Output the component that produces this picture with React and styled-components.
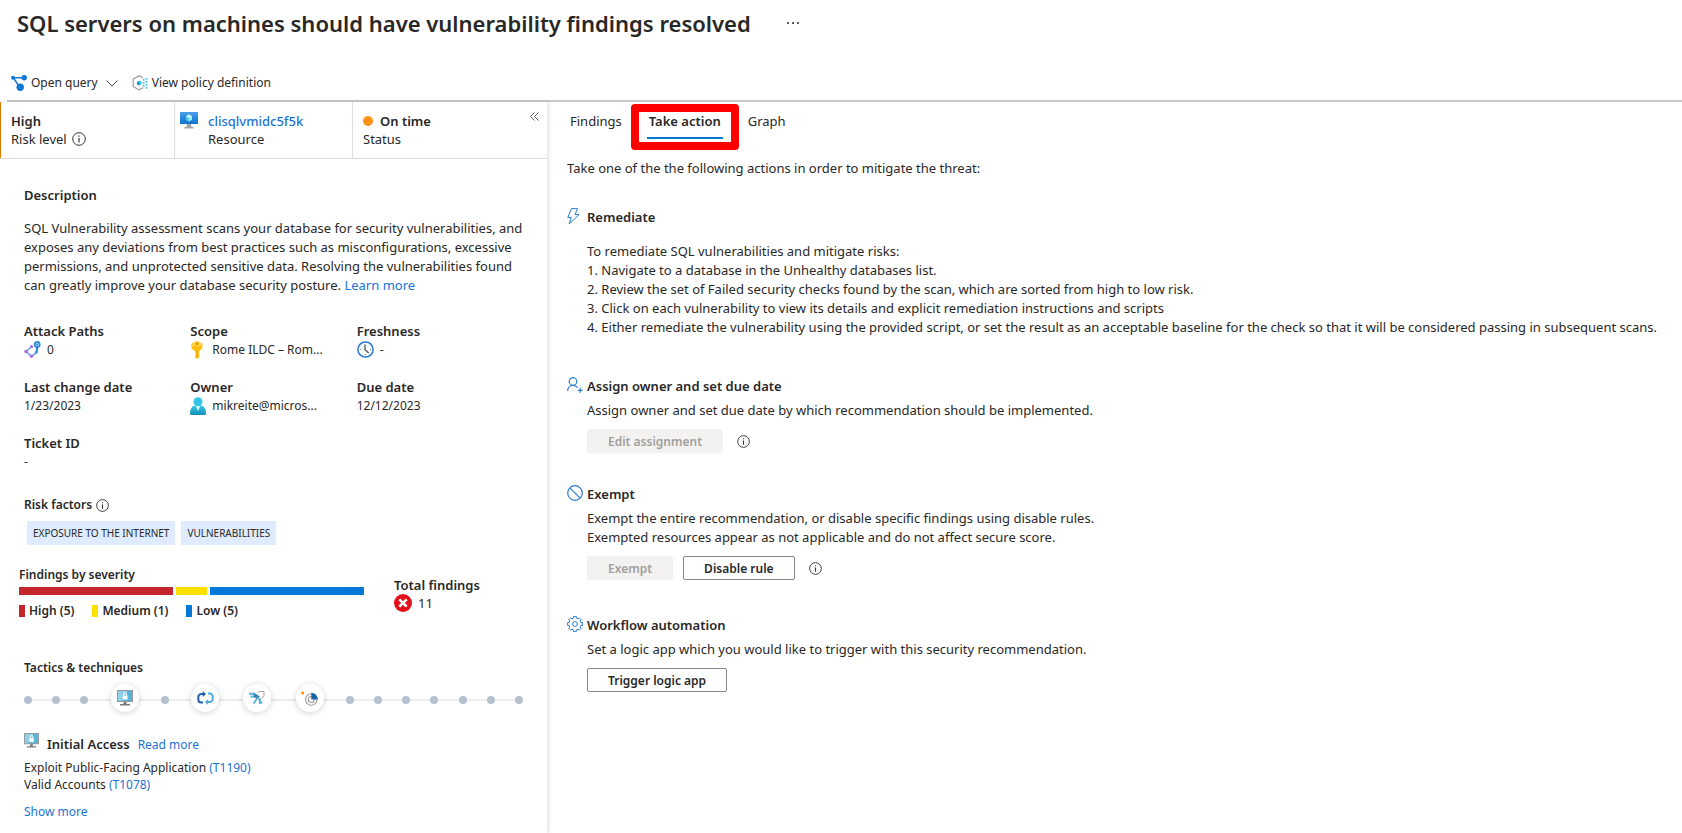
import React from "react";
import styled, { createGlobalStyle, css } from "styled-components";

const Global = createGlobalStyle`
  *, *::before, *::after { box-sizing: border-box; }
  body { margin: 0; background: #fff; }
  h1, h2, p, ol, ul, dl, dd, figure { margin: 0; padding: 0; }
  svg { display: block; flex: none; }
`;

const Page = styled.div`
  min-height: 100vh;
  display: flex;
  flex-direction: column;
  color: #292827;
  background: #fff;
  font: 400 13px/18px "Noto Sans", "Open Sans", sans-serif;
`;

const Header = styled.header`
  display: flex;
  align-items: center;
  gap: 36px;
  height: 45px;
  padding: 0 17px;
`;

const Title = styled.h1`
  font-size: 22px;
  line-height: 32px;
  font-weight: 600;
`;

const PlainButton = styled.button`
  display: inline-flex;
  align-items: center;
  padding: 0;
  border: 0;
  background: none;
  color: inherit;
  font: inherit;
  cursor: pointer;
`;

const Toolbar = styled.nav`
  display: flex;
  align-items: center;
  gap: 14px;
  height: 34px;
  margin-top: 21px;
  padding: 0 11px;
`;

const ToolButton = styled(PlainButton)`
  gap: 4px;
  font-size: 12px;
`;

const Rule = styled.div`
  height: 2px;
  margin-left: 7px;
  background: #c8c8c8;
`;

const Body = styled.div`
  display: grid;
  grid-template-columns: minmax(0, 547fr) minmax(0, 1135fr);
  flex: 1;
`;

const Side = styled.aside`
  display: flex;
  flex-direction: column;
  box-shadow: 2px 0 4px rgba(0, 0, 0, 0.11);
`;

const Cards = styled.div`
  display: grid;
  grid-template-columns: 174fr 178fr 195fr;
  height: 57px;
  border-bottom: 1px solid #dcdcdc;
`;

const Card = styled.div`
  display: flex;
  gap: 10px;
  padding: 10px 8px 0 ${(p) => (p.$icon ? 5 : 10)}px;
  border-left: 1px solid ${(p) => p.$edge || "#dcdcdc"};
`;

const CardText = styled.div`
  flex: 1;
`;

const CollapseButton = styled(PlainButton)`
  align-self: flex-start;
`;

const Line = styled.div`
  display: flex;
  align-items: center;
  gap: ${(p) => p.$gap || 5}px;
  font-weight: ${(p) => (p.$bold ? 600 : 400)};
`;

const Link = styled.a`
  color: #1a73d4;
  text-decoration: none;
  font-weight: ${(p) => (p.$strong ? 500 : 400)};
`;

const Dot = styled.span`
  width: 10px;
  height: 10px;
  border-radius: 50%;
  background: #ff9216;
`;

const SideBody = styled.div`
  padding: 27px 24px 0;
`;

const Heading = styled.h2`
  display: flex;
  align-items: center;
  gap: 4px;
  margin-top: ${(p) => p.$top || 0}px;
  font-size: ${(p) => (p.$small ? 12 : 13)}px;
  line-height: 18px;
  font-weight: 600;
`;

const Paragraph = styled.p`
  line-height: 19px;
  margin-top: ${(p) => p.$top || 0}px;
`;

const Facts = styled.dl`
  display: grid;
  grid-template-columns: repeat(3, 1fr);
  row-gap: 19px;
  margin-top: 27px;
`;

const FactLabel = styled.dt`
  font-weight: 600;
`;

const FactValue = styled.dd`
  display: flex;
  align-items: center;
  gap: 6px;
  font-size: 12px;
  height: 19px;
`;

const Chips = styled.ul`
  display: flex;
  gap: 6px;
  margin: 7px 3px 0;
  list-style: none;
`;

const Chip = styled.li`
  padding: 0 6px;
  font-size: 10px;
  line-height: 24px;
  background: #dfecff;
`;

const Severity = styled.div`
  display: flex;
  gap: 30px;
  padding: 21px 24px 0 19px;
`;

const Chart = styled.figure`
  flex: 0 0 345px;
`;

const Bar = styled.div`
  display: flex;
  gap: 3px;
  height: 8px;
  margin-top: 3px;
`;

const Segment = styled.span`
  flex: ${(p) => p.$share} 1 0;
  background: ${(p) => p.$color};
`;

const Legend = styled.figcaption`
  display: flex;
  gap: 18px;
  margin-top: 7px;
  font-size: 12px;
  font-weight: 600;
`;

const LegendItem = styled.span`
  display: flex;
  align-items: center;
  gap: 4px;
  &::before {
    content: "";
    width: 6px;
    height: 12px;
    background: ${(p) => p.$color};
  }
`;

const Total = styled.div`
  padding-top: 10px;
`;

const TotalValue = styled.div`
  display: flex;
  align-items: center;
  gap: 6px;
`;

const Tactics = styled.ol`
  position: relative;
  display: flex;
  align-items: center;
  height: 40px;
  margin: 3px -10px 0;
  list-style: none;
  &::before {
    content: "";
    position: absolute;
    left: 14px;
    right: 14px;
    top: 19px;
    height: 2px;
    background: #ecedf3;
  }
`;

const Step = styled.li`
  position: relative;
  flex: ${(p) => (p.$active ? 52 : 28)} 1 0;
  display: flex;
  justify-content: center;
`;

const StepDot = styled.span`
  width: 8px;
  height: 8px;
  border-radius: 50%;
  background: #b5c1ce;
`;

const StepDisc = styled.span`
  display: flex;
  align-items: center;
  justify-content: center;
  width: 28px;
  height: 28px;
  margin-bottom: 4px;
  border-radius: 50%;
  background: #fff;
  box-shadow: 0 1px 6px rgba(0, 0, 0, 0.18);
`;

const Access = styled.div`
  display: flex;
  align-items: baseline;
  gap: 8px;
  margin-top: 13px;
  svg { align-self: flex-start; }
`;

const AccessTitle = styled(Heading)`
  padding-top: 2px;
`;

const Techniques = styled.ul`
  margin: 5px 0 10px;
  font-size: 12px;
  line-height: 17px;
  list-style: none;
`;

const Small = styled.div`
  font-size: 12px;
`;

const Main = styled.main`
  padding: 10px 0 0 20px;
`;

const Tabs = styled.div`
  display: flex;
  align-items: flex-start;
  gap: 23px;
  height: 38px;
  padding-left: 1px;
`;

const Tab = styled.button`
  position: relative;
  height: 27px;
  padding: 0 2px 7px;
  border: 0;
  border-bottom: 2px solid ${(p) => (p.$on ? "#0078d4" : "transparent")};
  background: none;
  color: inherit;
  font: inherit;
  font-weight: ${(p) => (p.$on ? 600 : 400)};
  ${(p) =>
    p.$on &&
    css`
      &::after {
        content: "";
        position: absolute;
        inset: -8px -16px -13px;
        border: 8px solid #f00;
        border-radius: 4px;
      }
    `}
`;

const Action = styled.section`
  display: grid;
  grid-template-columns: 20px minmax(0, 1fr);
  margin-top: ${(p) => p.$top}px;
`;

const ActionText = styled.div`
  line-height: 19px;
  margin-top: ${(p) => p.$top || 6}px;
`;

const ActionButtons = styled.div`
  display: flex;
  align-items: center;
  gap: 10px;
  margin-top: 9px;
`;

const Button = styled.button`
  height: 24px;
  padding: 2px 20px 0;
  border: 1px solid #8a8886;
  border-radius: 2px;
  background: #fff;
  color: #292827;
  font: inherit;
  font-size: 12px;
  font-weight: 600;
  &:disabled {
    border-color: #f3f2f1;
    background: #f3f2f1;
    color: #a19f9d;
  }
`;

const InfoButton = styled(PlainButton)`
  margin-left: 4px;
`;

const Info = ({ size = 13 }) => (
  <svg width={size} height={size} viewBox="0 0 14 14" fill="none" stroke="#323130">
    <circle cx="7" cy="7" r="6.3" />
    <path d="M7 6v4.4M7 3.4v1.3" strokeWidth="1.2" />
  </svg>
);

const QueryIcon = () => (
  <svg width="16" height="16" viewBox="0 0 16 16" fill="#0f78d4">
    <path d="M2.2 2.8H13M2.5 3 9 12.5" stroke="#0f78d4" strokeWidth="1.4" />
    <circle cx="2" cy="2.8" r="2" />
    <circle cx="13.2" cy="2.8" r="2.7" />
    <circle cx="9.2" cy="12.2" r="3.7" />
  </svg>
);

const PolicyIcon = () => (
  <svg width="16" height="16" viewBox="0 0 16 16" fill="none">
    <path d="M11 2.700 7 .7 1.200 4v7.500L7 14.900l4-2.200" stroke="#9a9a9a" strokeWidth="1.200" />
    <path d="M7.200 5.400 9.500 6.700v2.600L7.200 10.600 5 9.300V6.700z" fill="#32c3e0" />
    <path d="M7.200 8v2.600L5 9.300V6.700z" fill="#198ab3" />
    <g fill="#50c4e8">
      <path d="M10.800 4h1.800v1.800h-1.800zM10.800 7h1.800v1.800h-1.800zM10.800 10h1.800v1.800h-1.800zM13.600 3h1.800v1.800h-1.800zM13.600 6h1.800v1.800h-1.800zM13.600 9h1.800v1.800h-1.800zM13.600 12h1.800v1.800h-1.800z" />
    </g>
  </svg>
);

const Chevron = () => (
  <svg width="16" height="7" viewBox="-4 0 16 7" fill="none" stroke="#484644">
    <path d="M.5.5 6 6 11.500.5" />
  </svg>
);

const Collapse = () => (
  <svg width="9" height="9" viewBox="0 0 9 9" fill="none" stroke="#605e5c">
    <path d="M4.500.5l-4 4 4 4M8.500.5l-4 4 4 4" />
  </svg>
);

const VmIcon = () => (
  <svg width="18" height="17" viewBox="0 0 18 17">
    <defs>
      <linearGradient id="vm" x1="0" y1="0" x2="0" y2="1">
        <stop offset="0" stopColor="#4a9eea" />
        <stop offset="1" stopColor="#0f74d0" />
      </linearGradient>
    </defs>
    <rect width="18" height="12" rx=".6" fill="url(#vm)" />
    <path d="M9 2.500 12 4.200v3.500L9 9.500 6 7.700V4.200z" fill="#9cebff" />
    <path d="M9 6v3.500L6 7.700V4.200z" fill="#50c8ee" />
    <path d="M9 2.500l3 1.700L9 6 6 4.200z" fill="#d5f7ff" />
    <path d="M7 12h4l.5 3H13.500v1.500h-9V15h2z" fill="#a3a3a3" />
  </svg>
);

const PathIcon = () => (
  <svg width="17" height="17" viewBox="0 0 17 17" fill="none">
    <path d="M7.500 5.700 2 10.500 7.500 15.200 13.500 11" stroke="#5ea0ef" strokeWidth="1.500" />
    <circle cx="7.500" cy="5.700" r="1.600" fill="#a66be8" />
    <circle cx="2" cy="10.500" r="1.800" fill="#a66be8" />
    <circle cx="7.500" cy="15.200" r="1.700" fill="#a66be8" />
    <path d="M13 5.500v3c0 1.500-.5 2.500-1.500 3.500" stroke="#2d8bd8" strokeWidth="2.200" />
    <circle cx="13.200" cy="3.500" r="2.500" fill="#d5eefb" stroke="#2d8bd8" strokeWidth="1.800" />
    <circle cx="13.200" cy="3.500" r="1" fill="#2d8bd8" />
  </svg>
);

const KeyIcon = () => (
  <svg width="16" height="18" viewBox="0 0 16 18">
    <path d="M7 0l5.300 2.700v5L9.200 10v6L7 18l-2-1.800v-1l1-1-1-1 1-1.200-1-1V10L1.500 7.700v-5z" fill="#ffbe11" />
    <path d="M7 0l5.300 2.700v2.500h-10.800V2.700z" fill="#ffd03a" />
    <circle cx="7" cy="2.800" r="1.200" fill="#e08a00" />
    <path d="M6.300 10h1.400v6.500H6.300z" fill="#ff9300" opacity=".6" />
  </svg>
);

const ClockIcon = () => (
  <svg width="17" height="17" viewBox="0 0 17 17" fill="none">
    <circle cx="8.500" cy="8.500" r="7.600" fill="#f7fafd" stroke="#2b7bd6" strokeWidth="1.500" />
    <path d="M8 3.500v5.300l3.700 3.200" stroke="#555" strokeWidth="1.300" />
    <path d="M3 8.500h1M13 8.500h1M8.500 13v1" stroke="#888" />
  </svg>
);

const PersonIcon = () => (
  <svg width="16" height="18" viewBox="0 0 16 18">
    <defs>
      <linearGradient id="person" x1="0" y1="0" x2="0" y2="1">
        <stop offset="0" stopColor="#32c8ea" />
        <stop offset="1" stopColor="#1a8fb5" />
      </linearGradient>
    </defs>
    <path d="M0 16.500C0 12 2 9 5 8.500h6c3 .5 5 3.500 5 8 0 1-.5 1.500-1.500 1.500h-13C.5 18 0 17.500 0 16.500z" fill="url(#person)" />
    <path d="M5.500 8.500h5L8 14z" fill="#e6fbff" />
    <circle cx="8" cy="4.700" r="4.500" fill="#36c5e8" />
  </svg>
);

const ErrorIcon = () => (
  <svg width="18" height="18" viewBox="0 0 18 18">
    <circle cx="9" cy="9" r="9" fill="#e3101b" />
    <path d="M5.300 5.300l7.400 7.400M12.700 5.300l-7.400 7.400" stroke="#fff" strokeWidth="2.600" />
  </svg>
);

const LockedScreen = ({ size = 16 }) => (
  <svg width={size} height={size} viewBox="0 0 16 16">
    <rect width="16" height="12" fill="#999" />
    <rect x="1" y="1" width="14" height="10" fill="#59b4d9" />
    <path d="M1 1h9L5 11H1z" fill="#8fd0e8" />
    <path d="M5.700 5.500h4.800v4H5.700z" fill="#fff" />
    <path d="M6.800 5.500V4a1.300 1.300 0 0 1 2.600 0v1.500" fill="none" stroke="#fff" />
    <path d="M6.500 12h3v2H13v1.500H3V14h3.500z" fill="#7a7a7a" />
  </svg>
);

const LoopIcon = () => (
  <svg width="17" height="14" viewBox="0 0 17 14" fill="none" strokeWidth="2">
    <path d="M6 11.500H4.300A3 3 0 0 1 1.300 8.500V6a3 3 0 0 1 3-3h2.200" stroke="#1b62a8" />
    <path d="M5.800 0 9 3 5.800 6z" fill="#1b62a8" />
    <path d="M11 2.500h1.700a3 3 0 0 1 3 3V8a3 3 0 0 1-3 3h-2.200" stroke="#4fabd6" />
    <path d="M11.200 14 8 11l3.200-3z" fill="#4fabd6" />
  </svg>
);

const EvasionIcon = () => (
  <svg width="16" height="14" viewBox="0 0 16 14" fill="none">
    <path d="M8.500 1.500l2-1H15v4L12.800 7.500" stroke="#a5a5a5" />
    <path d="M0 2.800h5.500M1.500 5.500H7M4.500 12.500 8.500 7M10.800 13V7" stroke="#59b4d9" strokeWidth="1.900" />
    <path d="M4.500 1.500 11 5.500 8.500 7.500 5 6.500z" fill="#3c87b5" />
    <path d="M9.500 7.500l3.500 5" stroke="#59b4d9" strokeWidth="1.400" />
  </svg>
);

const RadarIcon = () => (
  <svg width="17" height="15" viewBox="0 0 17 15" fill="none">
    <circle cx="1.600" cy="2" r="1.500" fill="#ff8c00" />
    <circle cx="10.300" cy="8.500" r="5.700" stroke="#9b9b9b" strokeWidth="1.100" />
    <circle cx="10.300" cy="8.500" r="3" stroke="#9b9b9b" strokeWidth="1.100" />
    <path d="M10.300 8.500V1.700a6.800 6.800 0 0 1 6.500 6.800z" fill="#1d63a8" />
  </svg>
);

const BoltIcon = () => (
  <svg width="13" height="17" viewBox="0 0 13 17" fill="none" stroke="#2b7cd3">
    <path d="M4.500.6h6L8 6.500h4.200L2.200 16l2-6.500H.8z" />
  </svg>
);

const AssignIcon = () => (
  <svg width="16" height="16" viewBox="0 0 16 16" fill="none" stroke="#2b7cd3" strokeWidth="1.200">
    <circle cx="6" cy="4.500" r="3.800" />
    <path d="M.7 14C.7 10.500 3 8.300 6 8.300c2 0 3.600.9 4.500 2.300M13.200 10.800v5M10.700 13.300h5" />
  </svg>
);

const BlockIcon = () => (
  <svg width="16" height="16" viewBox="0 0 16 16" fill="none" stroke="#2b7cd3" strokeWidth="1.200">
    <circle cx="8" cy="8" r="7.300" />
    <path d="M2.800 2.800l10.400 10.400" />
  </svg>
);

const gearPath = (() => {
  const points = [];
  for (let i = 0; i < 8; i += 1) {
    [[-14, 6.1], [-11, 7.500], [11, 7.500], [14, 6.1]].forEach(([offset, r]) => {
      const a = ((i * 45 + offset) * Math.PI) / 180;
      points.push(`${(8 + r * Math.cos(a)).toFixed(2)} ${(8 + r * Math.sin(a)).toFixed(2)}`);
    });
  }
  return `M${points.join("L")}Z`;
})();

const GearIcon = () => (
  <svg width="16" height="16" viewBox="0 0 16 16" fill="none" stroke="#2b7cd3">
    <path d={gearPath} />
    <circle cx="8" cy="8" r="2.400" />
  </svg>
);

const facts = [
  ["Attack Paths", "0", PathIcon],
  ["Scope", "Rome ILDC – Rom...", KeyIcon],
  ["Freshness", "-", ClockIcon],
  ["Last change date", "1/23/2023"],
  ["Owner", "mikreite@micros...", PersonIcon],
  ["Due date", "12/12/2023"],
  ["Ticket ID", "-"],
];

const severities = [
  ["High", 5, "#c4262e"],
  ["Medium", 1, "#fce100"],
  ["Low", 5, "#0078d7"],
];

const steps = [null, null, null, LockedScreen, null, LoopIcon, EvasionIcon, RadarIcon, null, null, null, null, null, null, null];

export default function App() {
  return (
    <Page>
      <Global />
      <Header>
        <Title>SQL servers on machines should have vulnerability findings resolved</Title>
        <PlainButton aria-label="More">
          <svg width="12" height="2" viewBox="0 0 12 2" fill="#605e5c">
            <path d="M0 0h2v2H0zM5 0h2v2H5zM10 0h2v2h-2z" />
          </svg>
        </PlainButton>
      </Header>
      <Toolbar>
        <ToolButton>
          <QueryIcon />
          Open query
          <Chevron />
        </ToolButton>
        <ToolButton>
          <PolicyIcon />
          View policy definition
        </ToolButton>
      </Toolbar>
      <Rule />
      <Body>
        <Side>
          <Cards>
            <Card $edge="#e07b00">
              <CardText>
                <Line $bold>High</Line>
                <Line>
                  Risk level <Info size={14} />
                </Line>
              </CardText>
            </Card>
            <Card $icon>
              <VmIcon />
              <CardText>
                <Link href="#resource" $strong>clisqlvmidc5f5k</Link>
                <Line>Resource</Line>
              </CardText>
            </Card>
            <Card>
              <CardText>
                <Line $bold $gap={7}>
                  <Dot /> On time
                </Line>
                <Line>Status</Line>
              </CardText>
              <CollapseButton aria-label="Collapse">
                <Collapse />
              </CollapseButton>
            </Card>
          </Cards>
          <SideBody>
            <Heading>Description</Heading>
            <Paragraph $top={15}>
              SQL Vulnerability assessment scans your database for security vulnerabilities, and exposes any deviations
              from best practices such as misconfigurations, excessive permissions, and unprotected sensitive data.
              Resolving the vulnerabilities found can greatly improve your database security posture.{" "}
              <Link href="#learn">Learn more</Link>
            </Paragraph>
            <Facts>
              {facts.map(([label, value, Icon]) => (
                <div key={label}>
                  <FactLabel>{label}</FactLabel>
                  <FactValue>
                    {Icon && <Icon />}
                    {value}
                  </FactValue>
                </div>
              ))}
            </Facts>
            <Heading $small $top={25}>
              Risk factors <Info />
            </Heading>
            <Chips>
              <Chip>EXPOSURE TO THE INTERNET</Chip>
              <Chip>VULNERABILITIES</Chip>
            </Chips>
          </SideBody>
          <Severity>
            <Chart>
              <Heading $small>Findings by severity</Heading>
              <Bar>
                {severities.map(([name, count, color]) => (
                  <Segment key={name} $share={count} $color={color} />
                ))}
              </Bar>
              <Legend>
                {severities.map(([name, count, color]) => (
                  <LegendItem key={name} $color={color}>
                    {name} ({count})
                  </LegendItem>
                ))}
              </Legend>
            </Chart>
            <Total>
              <Heading>Total findings</Heading>
              <TotalValue>
                <ErrorIcon /> 11
              </TotalValue>
            </Total>
          </Severity>
          <SideBody>
            <Heading $small $top={12}>Tactics &amp; techniques</Heading>
            <Tactics>
              {steps.map((Icon, i) => (
                <Step key={i} $active={!!Icon}>
                  {Icon ? (
                    <StepDisc>
                      <Icon />
                    </StepDisc>
                  ) : (
                    <StepDot />
                  )}
                </Step>
              ))}
            </Tactics>
            <Access>
              <LockedScreen size={15} />
              <AccessTitle>Initial Access</AccessTitle>
              <Small>
                <Link href="#read">Read more</Link>
              </Small>
            </Access>
            <Techniques>
              <li>
                Exploit Public-Facing Application <Link href="#t1190">(T1190)</Link>
              </li>
              <li>
                Valid Accounts <Link href="#t1078">(T1078)</Link>
              </li>
            </Techniques>
            <Small>
              <Link href="#more">Show more</Link>
            </Small>
          </SideBody>
        </Side>
        <Main>
          <Tabs role="tablist">
            <Tab role="tab">Findings</Tab>
            <Tab role="tab" aria-selected="true" $on>
              Take action
            </Tab>
            <Tab role="tab">Graph</Tab>
          </Tabs>
          <Paragraph $top={9}>Take one of the the following actions in order to mitigate the threat:</Paragraph>
          <Action $top={30}>
            <BoltIcon />
            <div>
              <Heading>Remediate</Heading>
              <ActionText $top={16}>
                <p>To remediate SQL vulnerabilities and mitigate risks:</p>
                <p>1. Navigate to a database in the Unhealthy databases list.</p>
                <p>2. Review the set of Failed security checks found by the scan, which are sorted from high to low risk.</p>
                <p>3. Click on each vulnerability to view its details and explicit remediation instructions and scripts</p>
                <p>
                  4. Either remediate the vulnerability using the provided script, or set the result as an acceptable
                  baseline for the check so that it will be considered passing in subsequent scans.
                </p>
              </ActionText>
            </div>
          </Action>
          <Action $top={40}>
            <AssignIcon />
            <div>
              <Heading>Assign owner and set due date</Heading>
              <ActionText>Assign owner and set due date by which recommendation should be implemented.</ActionText>
              <ActionButtons>
                <Button disabled>Edit assignment</Button>
                <InfoButton aria-label="About assignment">
                  <Info />
                </InfoButton>
              </ActionButtons>
            </div>
          </Action>
          <Action $top={32}>
            <BlockIcon />
            <div>
              <Heading>Exempt</Heading>
              <ActionText>
                Exempt the entire recommendation, or disable specific findings using disable rules.
                <br />
                Exempted resources appear as not applicable and do not affect secure score.
              </ActionText>
              <ActionButtons>
                <Button disabled>Exempt</Button>
                <Button>Disable rule</Button>
                <InfoButton aria-label="About exemptions">
                  <Info />
                </InfoButton>
              </ActionButtons>
            </div>
          </Action>
          <Action $top={36}>
            <GearIcon />
            <div>
              <Heading>Workflow automation</Heading>
              <ActionText>
                Set a logic app which you would like to trigger with this security recommendation.
              </ActionText>
              <ActionButtons>
                <Button>Trigger logic app</Button>
              </ActionButtons>
            </div>
          </Action>
        </Main>
      </Body>
    </Page>
  );
}
